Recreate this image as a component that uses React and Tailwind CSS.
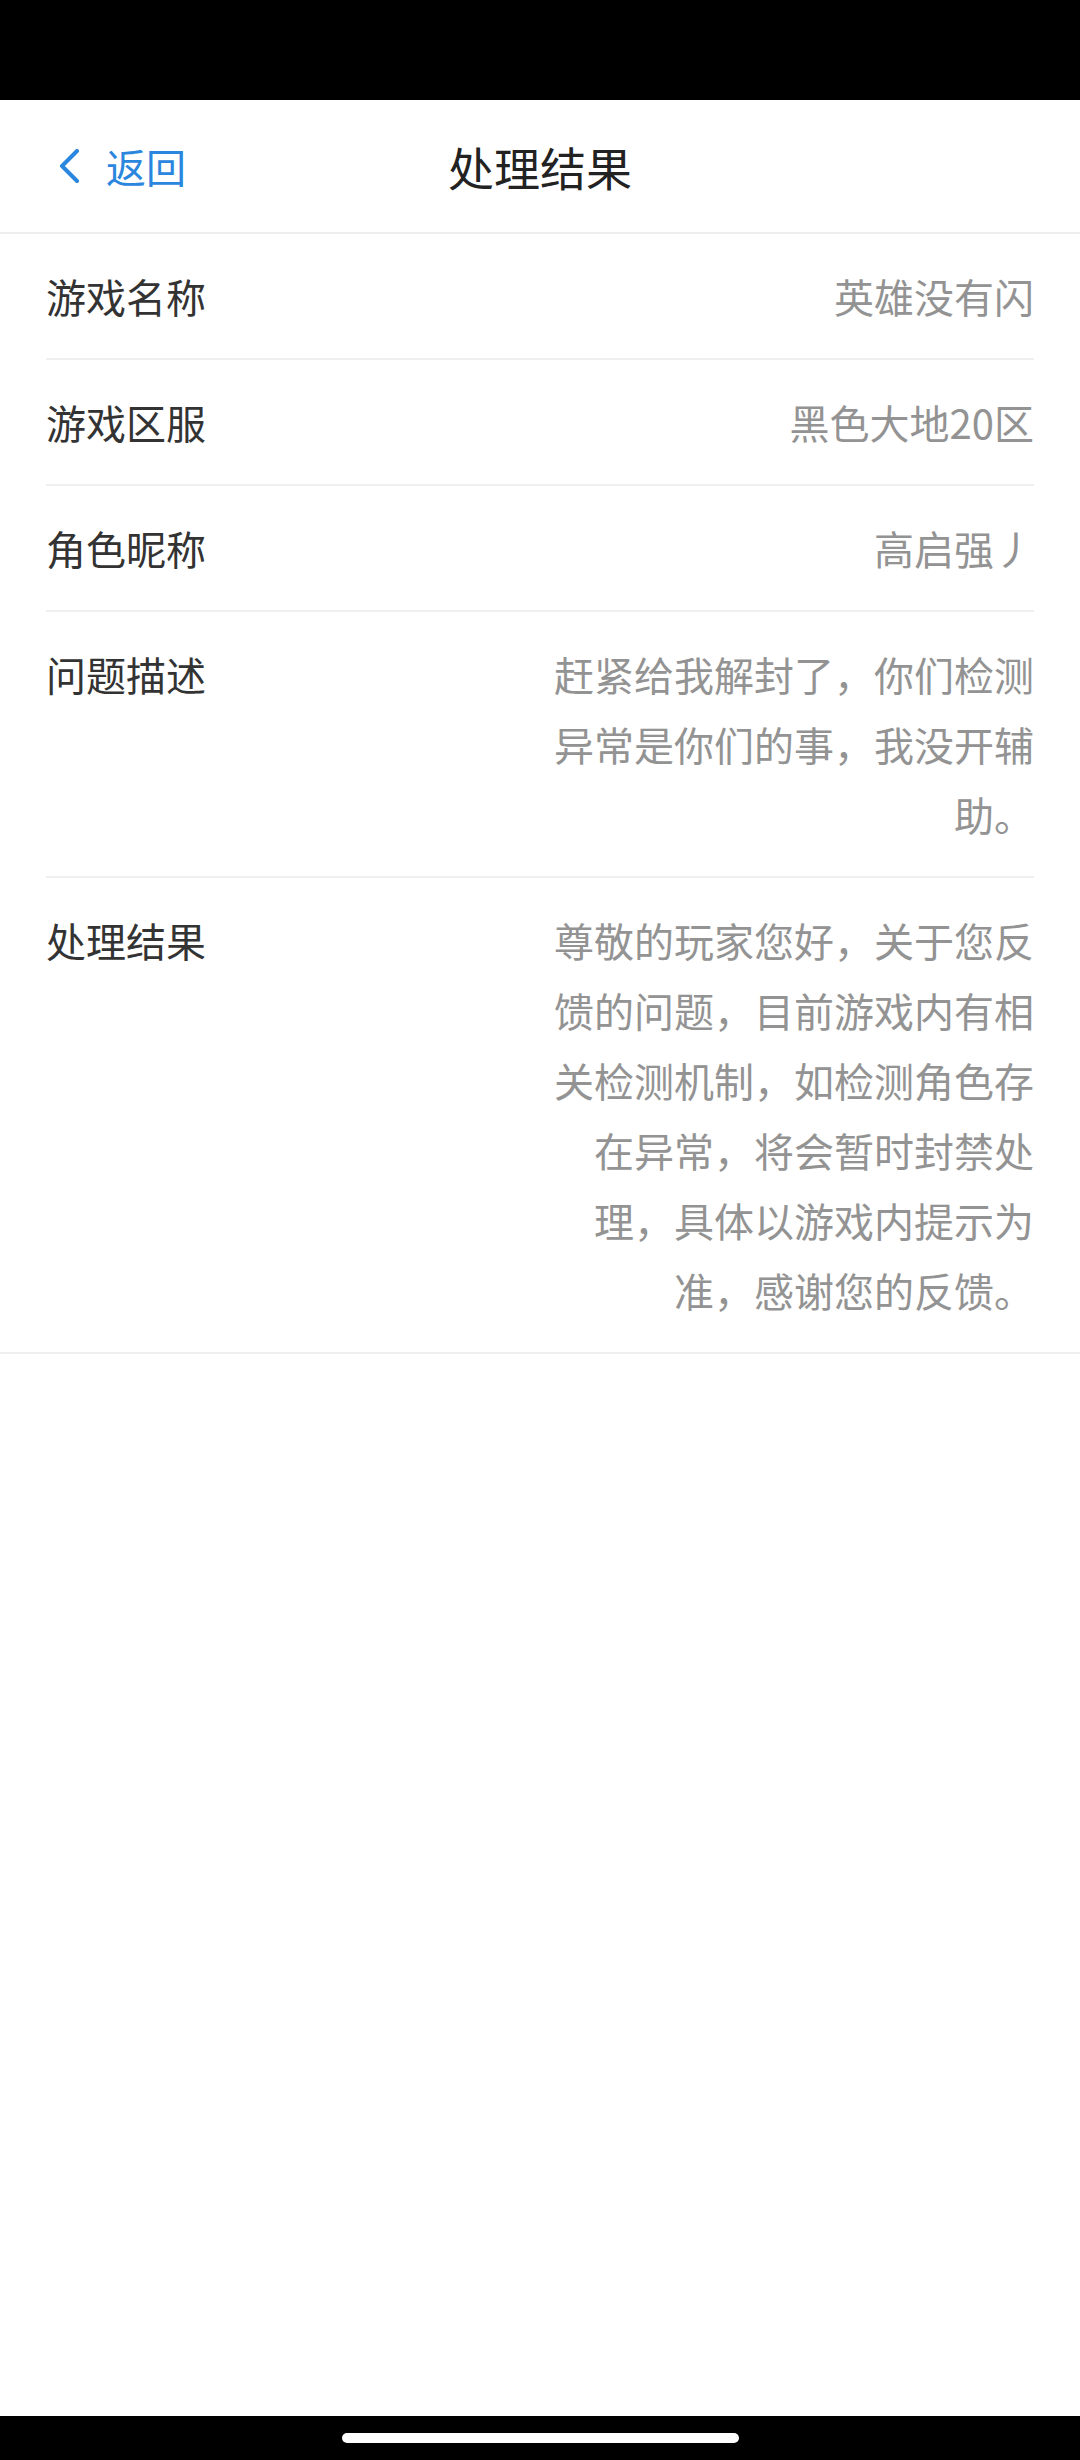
const rows = [
  { label: '游戏名称', value: '英雄没有闪' },
  { label: '游戏区服', value: '黑色大地20区' },
  { label: '角色昵称', value: '高启强丿' },
  { label: '问题描述', value: '赶紧给我解封了，你们检测异常是你们的事，我没开辅助。' },
  {
    label: '处理结果',
    value: '尊敬的玩家您好，关于您反馈的问题，目前游戏内有相关检测机制，如检测角色存在异常，将会暂时封禁处理，具体以游戏内提示为准，感谢您的反馈。',
  },
]

function App() {
  return (
    <div
      className="w-[1080px] h-[2460px] flex flex-col bg-white"
      style={{ fontFamily: '"Noto Sans CJK SC", "Noto Sans", sans-serif' }}
    >
      {/* Status bar */}
      <div className="h-[100px] bg-black shrink-0" />

      {/* Header */}
      <div className="h-[134px] shrink-0 flex items-center relative border-b-2 border-[#eeeeee]">
        <div className="flex items-center pl-[58px] gap-[26px] text-[#2b86de]">
          <svg width="22" height="34" viewBox="0 0 22 34" fill="none">
            <path d="M19 2 L4 17 L19 32" stroke="currentColor" strokeWidth="4" strokeLinecap="round" strokeLinejoin="round" />
          </svg>
          <span className="text-[40px] leading-none">返回</span>
        </div>
        <div className="absolute inset-0 flex items-center justify-center pointer-events-none">
          <span className="text-[46px] text-[#222222] leading-none">处理结果</span>
        </div>
      </div>

      {/* Detail list */}
      <div className="border-b-2 border-[#f0f0f0]">
        {rows.map((row, i) => (
          <div key={row.label} className="px-[46px]">
            <div
              className={`flex justify-between py-[27px] text-[40px] leading-[70px] ${
                i < rows.length - 1 ? 'border-b-2 border-[#f0f0f0]' : ''
              }`}
            >
              <span className="text-[#333333] shrink-0">{row.label}</span>
              <span className="text-[#939393] text-right w-[484px]">{row.value}</span>
            </div>
          </div>
        ))}
      </div>

      <div className="flex-1" />

      {/* Gesture bar */}
      <div className="h-[44px] bg-black shrink-0 flex justify-center pt-[17px]">
        <div className="w-[397px] h-[10px] rounded-full bg-white" />
      </div>
    </div>
  )
}

export default App
